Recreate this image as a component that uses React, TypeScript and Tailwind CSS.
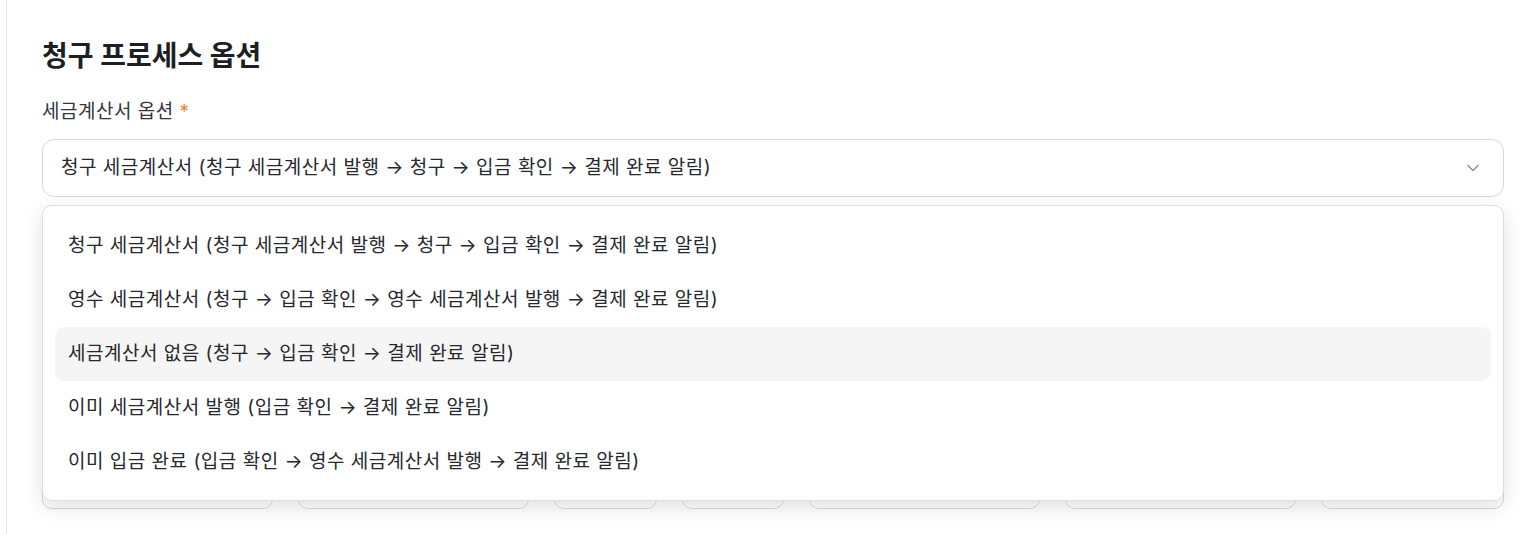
import { ChevronDown } from "lucide-react";

const OPTIONS = [
  "청구 세금계산서 (청구 세금계산서 발행 → 청구 → 입금 확인 → 결제 완료 알림)",
  "영수 세금계산서 (청구 → 입금 확인 → 영수 세금계산서 발행 → 결제 완료 알림)",
  "세금계산서 없음 (청구 → 입금 확인 → 결제 완료 알림)",
  "이미 세금계산서 발행 (입금 확인 → 결제 완료 알림)",
  "이미 입금 완료 (입금 확인 → 영수 세금계산서 발행 → 결제 완료 알림)",
];

const BUTTON_WIDTHS = ["w-[231px]", "w-[231px]", "w-[103px]", "w-[102px]", "w-[231px]", "w-[231px]", "w-[183px]"];

export default function App() {
  const hovered = 2;

  return (
    <div className="flex min-h-[534px] bg-white font-['Inter','Noto_Sans_CJK_KR',sans-serif] text-[#222]">
      {/* left rail */}
      <div className="w-[7px] shrink-0 border-r border-[#e3e5e8]" />

      <main className="flex-1 px-[35px] pt-[38px]">
        <h2 className="text-[28px] font-bold leading-[36px] text-[#1d1f24]">청구 프로세스 옵션</h2>

        <div className="mt-[26px]">
          <label className="block text-[19px] leading-[24px] tracking-[0.5px] text-[#33363d]">
            세금계산서 옵션 <span className="text-[#e8852c]">*</span>
          </label>

          <div className="relative mt-[15px]">
            {/* select trigger */}
            <button className="flex h-[58px] w-full items-center justify-between rounded-[12px] border border-[#d7d9de] bg-white pl-[18px] pr-[20px] text-left">
              <span className="text-[19px] tracking-[0.5px] text-[#26282d]">{OPTIONS[0]}</span>
              <ChevronDown className="h-[20px] w-[20px] text-[#8e9199]" strokeWidth={1.8} />
            </button>

            {/* dropdown menu */}
            <div className="absolute left-0 right-0 top-[66px] z-10 rounded-[10px] border border-[#dcdee2] bg-white px-[12px] pb-[11px] pt-[13px] shadow-[0_6px_20px_rgba(0,0,0,0.12)]">
              {OPTIONS.map((opt, i) => (
                <div
                  key={opt}
                  className={`flex h-[54px] items-center rounded-[9px] px-[13px] text-[19px] tracking-[0.5px] text-[#26282d] ${i === hovered ? "bg-[#f5f5f6]" : ""}`}
                >
                  {opt}
                </div>
              ))}
            </div>
          </div>

          {/* button row, mostly hidden behind the open menu */}
          <div className="mt-[268px] flex gap-[25px]">
            {BUTTON_WIDTHS.map((w, i) => (
              <div key={i} className={`${w} h-[44px] rounded-[10px] border border-[#d7d9de] bg-white`} />
            ))}
          </div>
        </div>
      </main>
    </div>
  );
}
